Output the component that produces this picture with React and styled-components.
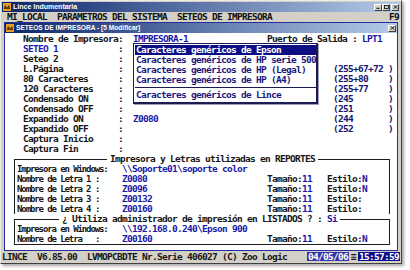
import React from "react";
import styled, { createGlobalStyle } from "styled-components";

const MONO = `"DejaVu Sans Mono", "Liberation Mono", monospace`;
const SANS = `"Liberation Sans", Arial, sans-serif`;

const Global = createGlobalStyle`
  html, body { margin: 0; padding: 0; background: #ffffff; }
  body { width: 410px; height: 270px; overflow: hidden; }
`;

const Window = styled.div`
  width: 402px;
  height: 264px;
  box-sizing: border-box;
  background: #d4d0c8;
  border: 1px solid;
  border-color: #ecebe6 #404040 #404040 #ecebe6;
  padding: 1px;
  display: flex;
  flex-direction: column;
  box-shadow: 2px 2px 3px rgba(0, 0, 0, 0.35);
  font-family: ${MONO};
  font-weight: bold;
  font-size: 9.5px;
  letter-spacing: -0.72px;
  color: #111;
`;

const TitleBar = styled.div`
  height: 10px;
  flex: none;
  display: flex;
  align-items: center;
  padding: 0 1px;
  background: linear-gradient(to right, ${(p) => p.$from}, ${(p) => p.$to});
`;

const TitleText = styled.span`
  font-family: ${SANS};
  font-weight: bold;
  font-size: ${(p) => p.$size}px;
  letter-spacing: 0;
  color: #fff;
  margin-left: 2px;
  white-space: pre;
  line-height: 10px;
`;

const Controls = styled.div`
  margin-left: auto;
  display: flex;
  align-items: center;
`;

const CtrlButton = styled.div`
  width: 8px;
  height: 7px;
  box-sizing: border-box;
  background: #d4d0c8;
  border: 1px solid;
  border-color: #fff #404040 #404040 #fff;
  margin-left: ${(p) => p.$gap || 0}px;
  display: flex;
  align-items: center;
  justify-content: center;
`;

const MenuBar = styled.div`
  height: 10px;
  flex: none;
  display: flex;
  align-items: flex-start;
  padding-left: 5px;
  line-height: 9px;
  white-space: pre;
`;

const MenuItem = styled.span`
  margin-right: 10px;
`;

const MenuKey = styled.span`
  margin-left: auto;
  margin-right: 1px;
`;

const Child = styled.div`
  flex: 1;
  margin: 0 2px;
  display: flex;
  flex-direction: column;
  border: 1px solid #23309a;
  min-height: 0;
`;

const Body = styled.div`
  flex: 1;
  position: relative;
  background: #fff;
  padding-top: 1px;
  line-height: 10px;
  white-space: pre;
`;

const FieldRow = styled.div`
  display: grid;
  grid-template-columns: ${(p) => p.$cols};
  height: 10px;
  padding-left: ${(p) => p.$indent}px;
`;

const Label = styled.span`
  color: ${(p) => (p.$focus ? "#1c1ca8" : "#151515")};
`;

const SmallLabel = styled.span`
  color: #151515;
  font-size: 9px;
  letter-spacing: -1.1px;
`;

const Value = styled.span`
  color: #1a1aa6;
`;

const Extra = styled.span`
  color: #17176e;
`;

const Group = styled.fieldset`
  margin: 0 7px 0 9px;
  padding: 0 0 0 2px;
  border: 1px solid #1e1e1e;
  border-bottom: ${(p) => (p.$open ? "none" : "1px solid #1e1e1e")};
  min-width: 0;
`;

const Legend = styled.legend`
  margin-left: ${(p) => p.$offset}px;
  padding: 0 3px;
  line-height: 10px;
  height: 10px;
  color: #151515;
`;

const Popup = styled.div`
  position: absolute;
  left: 128px;
  top: 10px;
  width: 185px;
  box-sizing: border-box;
  border: 1px solid #1c1c50;
  border-right-width: 2px;
  border-bottom-width: 2px;
  padding: 1px 0 2px 1px;
  background: #fff;
  box-shadow: 1px 1px 0 #a0a0b8;
`;

const PopupItem = styled.div`
  height: 10px;
  line-height: 10px;
  padding-left: 1px;
  color: ${(p) => (p.$selected ? "#fff" : "#1a1a7c")};
  background: ${(p) => (p.$selected ? "#0d0d84" : "transparent")};
`;

const PopupSep = styled.div`
  height: 1px;
  margin: 2px 0;
  background: #1c1c50;
`;

const StatusBar = styled.div`
  height: 11px;
  flex: none;
  display: flex;
  align-items: center;
  line-height: 10px;
  white-space: pre;
  color: #151515;
`;

const Spacer = styled.span`
  flex: 1;
`;

const Clock = styled.span`
  padding: 0 1px;
  color: #fff;
  background: ${(p) => p.$bg};
  line-height: 9px;
`;

const Sep = styled.span`
  margin: 0 2px;
`;

function AppIcon() {
  return (
    <svg width="8" height="8" viewBox="0 0 8 8">
      <rect x="0" y="0" width="8" height="8" fill="#e8a020" />
      <path d="M1 6 L2 2 L3.5 4 L4.5 4 L6 2 L7 6 Z" fill="#3a1a00" />
      <rect x="2.5" y="4.6" width="1" height="0.8" fill="#ffe060" />
      <rect x="4.6" y="4.6" width="1" height="0.8" fill="#ffe060" />
    </svg>
  );
}

function Glyph({ kind }) {
  if (kind === "min")
    return (
      <svg width="4" height="4" viewBox="0 0 4 4">
        <rect x="0.5" y="2.8" width="3" height="1" fill="#000" />
      </svg>
    );
  if (kind === "max")
    return (
      <svg width="5" height="4" viewBox="0 0 5 4">
        <rect x="0.5" y="0.5" width="4" height="3" fill="none" stroke="#000" strokeWidth="0.8" />
      </svg>
    );
  return (
    <svg width="5" height="4" viewBox="0 0 5 4">
      <path d="M0.8 0.3 L4.2 3.7 M4.2 0.3 L0.8 3.7" stroke="#000" strokeWidth="0.9" />
    </svg>
  );
}

const mainCols = "95px 15px 200px 60px";
const mainRows = [
  { label: "SETEO 1", focus: true },
  { label: "Seteo 2" },
  { label: "L.Página", extra: "(255+67+72 )" },
  { label: "80 Caracteres", extra: "(255+80    )" },
  { label: "120 Caracteres", extra: "(255+77    )" },
  { label: "Condensado ON", extra: "(245       )" },
  { label: "Condensado OFF", extra: "(251       )" },
  { label: "Expandido ON", value: "Z0080", extra: "(244       )" },
  { label: "Expandido OFF", extra: "(252       )" },
  { label: "Captura Inicio" },
  { label: "Captura Fin" },
];

const popupItems = [
  "Caracteres genéricos de Epson",
  "Caracteres genéricos de HP serie 500",
  "Caracteres genéricos de HP (Legal)",
  "Caracteres genéricos de HP (A4)",
];

const lowerCols = "78px 27px 145px 60px 60px";

function LetraRow({ label, value, estilo }) {
  return (
    <FieldRow $cols={lowerCols} $indent={0}>
      <SmallLabel>{label}</SmallLabel>
      <SmallLabel>:</SmallLabel>
      <Value>{value}</Value>
      <Label>
        Tamaño:<Value>11</Value>
      </Label>
      <Label>
        Estilo:<Value>{estilo}</Value>
      </Label>
    </FieldRow>
  );
}

function WinRow({ value }) {
  return (
    <FieldRow $cols="105px auto" $indent={0}>
      <SmallLabel>Impresora en Windows:</SmallLabel>
      <Value>{value}</Value>
    </FieldRow>
  );
}

export default function App() {
  return (
    <>
      <Global />
      <Window>
        <TitleBar $from="#0a246a" $to="#b4cbe8">
          <AppIcon />
          <TitleText $size={7}>Lince Indumentaria</TitleText>
          <Controls>
            <CtrlButton><Glyph kind="min" /></CtrlButton>
            <CtrlButton><Glyph kind="max" /></CtrlButton>
            <CtrlButton $gap={1}><Glyph kind="close" /></CtrlButton>
          </Controls>
        </TitleBar>
        <MenuBar>
          <MenuItem>MI_LOCAL</MenuItem>
          <MenuItem>PARAMETROS DEL SISTEMA</MenuItem>
          <MenuItem>SETEOS DE IMPRESORA</MenuItem>
          <MenuKey>F9</MenuKey>
        </MenuBar>
        <Child>
          <TitleBar $from="#0a246a" $to="#b4cbe8">
            <AppIcon />
            <TitleText $size={6.6}>SETEOS DE IMPRESORA - [5 Modificar]</TitleText>
            <Controls>
              <CtrlButton><Glyph kind="close" /></CtrlButton>
            </Controls>
          </TitleBar>
          <Body>
            <FieldRow $cols="95px 15px 134px auto" $indent={18}>
              <Label>Nombre de Impresora</Label>
              <Label>:  </Label>
              <Value>IMPRESORA-1</Value>
              <Label>
                Puerto de Salida : <Value>LPT1</Value>
              </Label>
            </FieldRow>
            {mainRows.map((r) => (
              <FieldRow key={r.label} $cols={mainCols} $indent={18}>
                <Label $focus={r.focus}>{r.label}</Label>
                <Label>:  </Label>
                <Value>{r.value || ""}</Value>
                <Extra>{r.extra || ""}</Extra>
              </FieldRow>
            ))}
            <Group $open>
              <Legend $offset={90}>Impresora y Letras utilizadas en REPORTES</Legend>
              <WinRow value="\\Soporte01\soporte color" />
              <LetraRow label="Nombre de Letra 1" value="Z0080" estilo="N" />
              <LetraRow label="Nombre de Letra 2" value="Z0096" estilo="N" />
              <LetraRow label="Nombre de Letra 3" value="Z00132" estilo="" />
              <LetraRow label="Nombre de Letra 4" value="Z00160" estilo="" />
            </Group>
            <Group>
              <Legend $offset={42}>
                ¿ Utiliza administrador de impresión en LISTADOS ? : <Value>Si</Value>
              </Legend>
              <WinRow value="\\192.168.0.240\Epson 900" />
              <LetraRow label="Nombre de Letra" value="Z00160" estilo="N" />
            </Group>
            <Popup>
              {popupItems.map((t, i) => (
                <PopupItem key={t} $selected={i === 0}>{t}</PopupItem>
              ))}
              <PopupSep />
              <PopupItem>Caracteres genéricos de Lince</PopupItem>
            </Popup>
          </Body>
        </Child>
        <StatusBar>
          <span>LINCE  V6.85.00  LVMOPCBDTE Nr.Serie 406027 (C) Zoo Logic</span>
          <Spacer />
          <Clock $bg="#3434a8">04/05/06</Clock>
          <Sep>≡</Sep>
          <Clock $bg="#0b0b8c">15:57:59</Clock>
        </StatusBar>
      </Window>
    </>
  );
}
